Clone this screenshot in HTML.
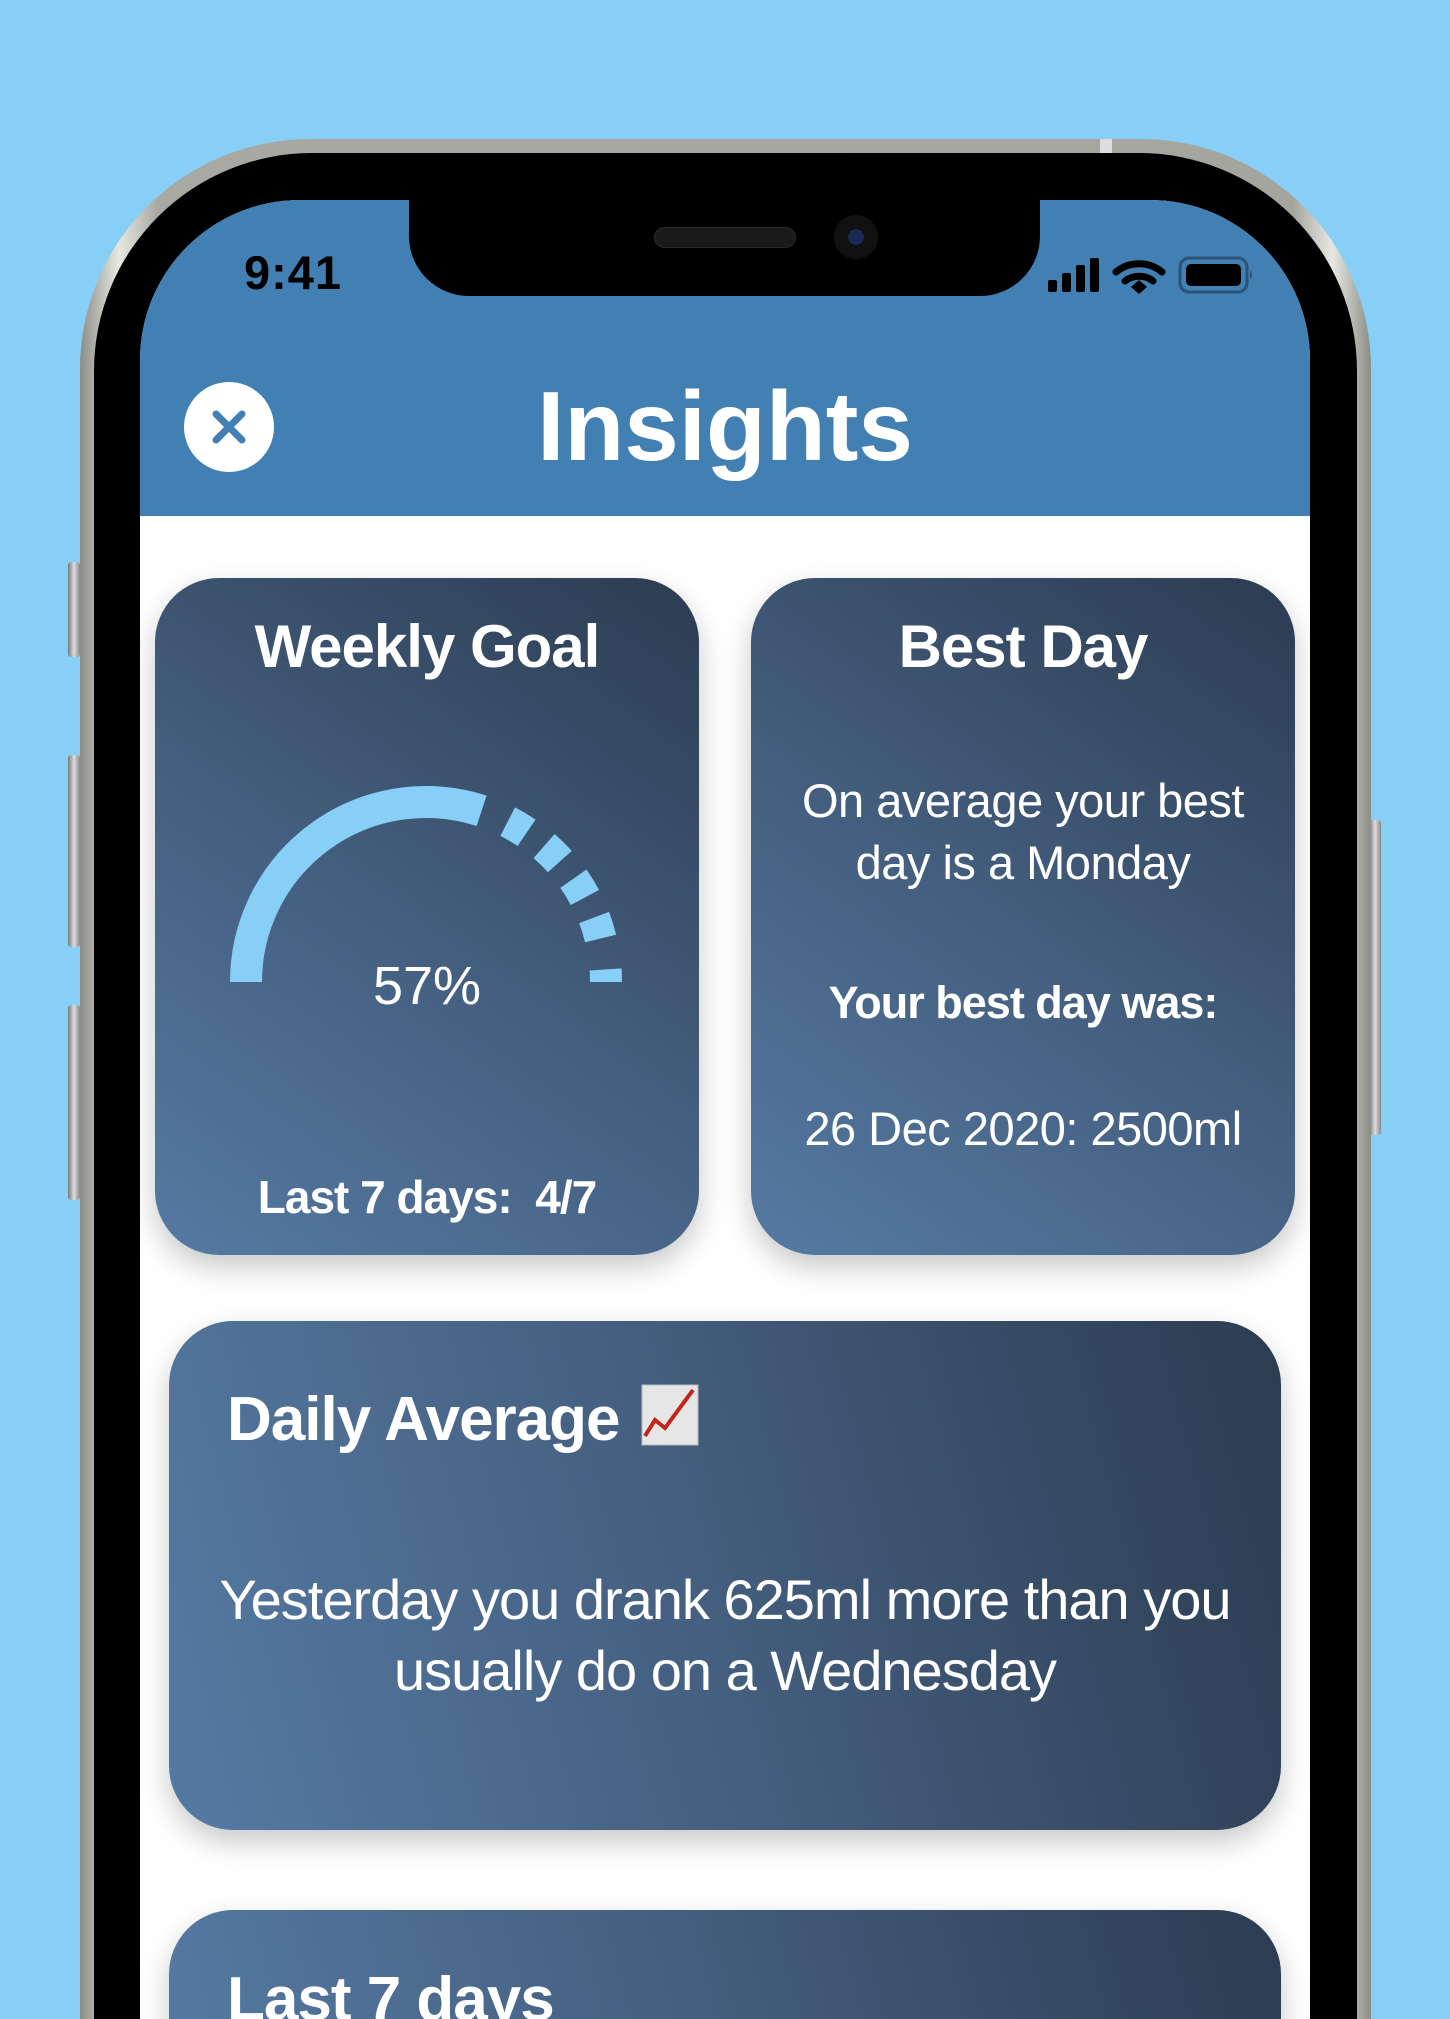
<!DOCTYPE html>
<html style="width:1450px;height:2019px;overflow:hidden"><head><meta charset="utf-8"><style>
*{margin:0;padding:0;box-sizing:border-box}
body{width:1450px;height:2019px;background:#87cff7;position:relative;overflow:hidden;font-family:"Liberation Sans",sans-serif}
.abs{position:absolute}
.frame{left:80px;top:139px;width:1291px;height:1880px;border-radius:230px 230px 0 0;background:linear-gradient(90deg,#8d8d88,#e8e8e2 3%,#a9a9a3 6%,#a5a59f 94%,#e8e8e2 97%,#8d8d88);}
.bezel{left:94px;top:153px;width:1263px;height:1866px;border-radius:218px 218px 0 0;background:#000}
.screen{left:140px;top:200px;width:1170px;height:1819px;border-radius:160px 160px 0 0;background:#fff;overflow:hidden}
.header{left:0;top:0;width:1170px;height:316px;background:#427fb3}
.notch{left:409px;top:195px;width:631px;height:101px;background:#000;border-radius:0 0 60px 60px}
.btn{background:linear-gradient(90deg,#777,#ddd,#888);border-radius:3px}
.card{border-radius:64px;background:linear-gradient(35deg,#557aa2 0%,#435d7d 50%,#2c3c51 100%);box-shadow:0 12px 30px rgba(0,0,0,.22);color:#fff}
.t{position:absolute;width:100%;text-align:center;color:#fff;white-space:nowrap}
</style></head><body>
<div class="abs btn" style="left:68px;top:562px;width:12px;height:95px"></div>
<div class="abs btn" style="left:68px;top:755px;width:12px;height:192px"></div>
<div class="abs btn" style="left:68px;top:1005px;width:12px;height:195px"></div>
<div class="abs btn" style="left:1369px;top:820px;width:12px;height:315px"></div>
<div class="abs frame"></div>
<div class="abs" style="left:1100px;top:139px;width:12px;height:16px;background:#ddd"></div>
<div class="abs bezel"></div>
<div class="abs screen">
  <div class="abs header"></div>
  <div class="abs" style="left:-140px;top:-200px;width:1450px;height:2019px;overflow:hidden">
    <div class="abs notch" style="top:150px;height:146px"></div>
    <div class="abs" style="left:654px;top:227px;width:142px;height:21px;border-radius:11px;background:#1a1a1a;border:1px solid #2a2a2a"></div>
    <div class="abs" style="left:834px;top:215px;width:44px;height:44px;border-radius:50%;background:#111"></div>
    <div class="abs" style="left:848px;top:229px;width:16px;height:16px;border-radius:50%;background:#1b2a55"></div>
    <div class="abs" style="left:244px;top:245px;font-size:47px;font-weight:bold;color:#000;letter-spacing:1px">9:41</div>
    <svg class="abs" style="left:1040px;top:250px" width="220" height="50" viewBox="1040 250 220 50">
      <rect x="1048" y="280" width="9" height="12" rx="2"/>
      <rect x="1062" y="273" width="9" height="19" rx="2"/>
      <rect x="1076" y="265" width="9" height="27" rx="2"/>
      <rect x="1090" y="258" width="9" height="34" rx="2"/>
      <path d="M1116 272 A36 36 0 0 1 1162 272" fill="none" stroke="#000" stroke-width="7" stroke-linecap="round"/>
      <path d="M1125 281 A23 23 0 0 1 1153 281" fill="none" stroke="#000" stroke-width="7" stroke-linecap="round"/>
      <path d="M1131 287 L1139 280 L1147 287 L1139 294 Z"/>
      <rect x="1180" y="258" width="67" height="34" rx="9" fill="none" stroke="#2b5278" stroke-width="3"/>
      <rect x="1186" y="264" width="55" height="22" rx="5"/>
      <path d="M1250 270 q4 5 0 10 z" fill="#2b5278"/>
    </svg>
    <div class="abs" style="left:184px;top:382px;width:90px;height:90px;border-radius:50%;background:#fff"></div>
    <svg class="abs" style="left:184px;top:382px" width="90" height="90"><path d="M32 32 L58 58 M58 32 L32 58" stroke="#427fb3" stroke-width="7" stroke-linecap="round"/></svg>
    <div class="t" style="left:0;top:370px;font-size:98px;font-weight:bold">Insights</div>

    <div class="abs card" style="left:155px;top:578px;width:544px;height:677px"></div>
    <div class="t" style="left:155px;width:544px;top:612px;font-size:60px;font-weight:bold;letter-spacing:-1px">Weekly Goal</div>
    <svg class="abs" style="left:0;top:0" width="1450" height="1300">
      <g fill="none" stroke="#87cff7" stroke-width="32">
        <path d="M246 982 A180 180 0 0 1 481.6 810.8"/>
        <path d="M507.7 821.6 A180 180 0 0 1 526.6 832.8"/>
        <path d="M544.1 846.1 A180 180 0 0 1 559.8 861.6"/>
        <path d="M573.4 878.7 A180 180 0 0 1 584.9 897.5"/>
        <path d="M594.1 917.5 A180 180 0 0 1 600.6 938.5"/>
        <path d="M605.6 969.4 A180 180 0 0 1 606 982"/>
      </g>
    </svg>
    <div class="t" style="left:155px;width:544px;top:955px;font-size:54px">57%</div>
    <div class="t" style="left:155px;width:544px;top:1170px;font-size:46px;font-weight:bold;letter-spacing:-1px">Last 7 days:&nbsp; 4/7</div>

    <div class="abs card" style="left:751px;top:578px;width:544px;height:677px"></div>
    <div class="t" style="left:751px;width:544px;top:612px;font-size:60px;font-weight:bold;letter-spacing:-1px">Best Day</div>
    <div class="t" style="left:751px;width:544px;top:770px;font-size:47px;line-height:62px;letter-spacing:-0.5px">On average your best<br>day is a Monday</div>
    <div class="t" style="left:751px;width:544px;top:977px;font-size:45px;font-weight:bold;letter-spacing:-1px">Your best day was:</div>
    <div class="t" style="left:751px;width:544px;top:1101px;font-size:47px;letter-spacing:-0.5px">26 Dec 2020: 2500ml</div>

    <div class="abs card" style="left:169px;top:1321px;width:1112px;height:509px;background:linear-gradient(75deg,#557aa2 0%,#435d7d 50%,#2c3c51 100%)"></div>
    <div class="abs" style="left:227px;top:1384px;font-size:62px;font-weight:bold;color:#fff;letter-spacing:-1px">Daily Average</div>
    <svg class="abs" style="left:641px;top:1384px" width="58" height="62"><rect x="1" y="1" width="56" height="60" fill="#e6e6e6" stroke="#bbb"/><path d="M4 52 L14 36 L24 44 L52 6" fill="none" stroke="#c0261b" stroke-width="4"/></svg>
    <div class="t" style="left:169px;width:1112px;top:1564px;font-size:56px;line-height:71px;letter-spacing:-1px">Yesterday you drank 625ml more than you<br>usually do on a Wednesday</div>

    <div class="abs card" style="left:169px;top:1910px;width:1112px;height:200px;background:linear-gradient(75deg,#557aa2 0%,#435d7d 50%,#2c3c51 100%)"></div>
    <div class="abs" style="left:227px;top:1964px;font-size:62px;font-weight:bold;color:#fff;letter-spacing:-1px">Last 7 days</div>
  </div>
</div>
</body></html>
